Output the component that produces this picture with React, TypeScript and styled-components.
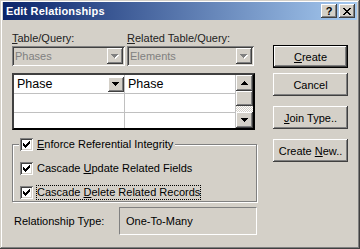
import React from "react";
import styled, { createGlobalStyle, css } from "styled-components";

const GlobalStyle = createGlobalStyle`
  html, body {
    margin: 0;
    padding: 0;
    background: #d4d0c8;
  }
  body {
    font-family: "Liberation Sans", Arial, sans-serif;
    font-size: 11px;
    color: #000;
  }
`;

const raised = css`
  background: #d4d0c8;
  box-shadow: inset -1px -1px #404040, inset 1px 1px #fff, inset -2px -2px #808080, inset 2px 2px #d4d0c8;
`;

const sunken = css`
  box-shadow: inset 1px 1px #808080, inset -1px -1px #fff, inset 2px 2px #404040, inset -2px -2px #d4d0c8;
`;

const Window = styled.div`
  width: 360px;
  height: 249px;
  box-sizing: border-box;
  padding: 2px 3px 3px 3px;
  background: #d4d0c8;
  box-shadow: inset -1px -1px #404040, inset 1px 1px #d4d0c8, inset -2px -2px #808080, inset 2px 2px #fff;
  display: flex;
  flex-direction: column;
`;

const TitleBar = styled.div`
  height: 18px;
  display: flex;
  align-items: flex-start;
  padding-left: 3px;
  background: linear-gradient(to right, #0a246a, #a6caf0);
`;

const TitleText = styled.span`
  flex: 1;
  color: #fff;
  font-weight: bold;
  font-size: 11px;
  letter-spacing: 0.15px;
  line-height: 17px;
  padding-top: 1px;
`;

const CaptionButton = styled.span`
  ${raised};
  width: 16px;
  height: 14px;
  margin-top: 2px;
  margin-left: 2px;
  display: flex;
  align-items: center;
  justify-content: center;
  font-weight: bold;
  font-size: 11px;
  line-height: 14px;
  &:last-child {
    margin-right: 2px;
  }
`;

const Body = styled.div`
  flex: 1;
  display: flex;
  padding: 12px 0 0 9px;
`;

const LeftCol = styled.div`
  width: 245px;
  display: flex;
  flex-direction: column;
`;

const RightCol = styled.div`
  width: 75px;
  margin-left: 16px;
  padding-top: 13px;
  display: flex;
  flex-direction: column;
`;

const Pair = styled.div<{ $gap?: number }>`
  display: grid;
  grid-template-columns: 113px 127px;
  column-gap: 2px;
  margin-top: ${(p) => p.$gap ?? 0}px;
`;

const FieldLabel = styled.span`
  height: 13px;
  line-height: 13px;
  color: #222;
`;

const Combo = styled.div`
  ${sunken};
  height: 20px;
  box-sizing: border-box;
  padding: 2px;
  display: flex;
  align-items: center;
  background: #d4d0c8;
`;

const ComboText = styled.span`
  flex: 1;
  padding-left: 1px;
  color: #808080;
`;

const ArrowButton = styled.span<{ $h?: number }>`
  ${raised};
  width: 16px;
  height: ${(p) => p.$h ?? 16}px;
  flex: none;
  display: flex;
  align-items: center;
  justify-content: center;
`;

const Grid = styled.div`
  margin-top: 7px;
  width: 243px;
  height: 57px;
  box-sizing: border-box;
  border: 2px solid;
  border-color: #404040 #000 #000 #404040;
  display: flex;
  background: #fff;
`;

const Rows = styled.div`
  flex: 1;
  display: flex;
  flex-direction: column;
  overflow: hidden;
`;

const Row = styled.div`
  display: grid;
  grid-template-columns: 111px 111px;
  height: 19px;
  flex: none;
  border-bottom: 1px solid #c0c0c0;
  box-sizing: border-box;
`;

const Cell = styled.div`
  border-right: 1px solid #c0c0c0;
  display: flex;
  align-items: center;
  padding-left: 3px;
  font-size: 12.5px;
`;

const Scrollbar = styled.div`
  width: 17px;
  display: flex;
  flex-direction: column;
`;

const Thumb = styled.span`
  ${raised};
  height: 15px;
`;

const Track = styled.span`
  flex: 1;
  background: conic-gradient(#fff 25%, #d4d0c8 0 50%, #fff 0 75%, #d4d0c8 0);
  background-size: 2px 2px;
`;

const Group = styled.fieldset`
  margin: 8px 0 0 0;
  padding: 0 0 2px 0;
  min-width: 0;
  width: 245px;
  box-sizing: border-box;
  border: 1px solid #808080;
  box-shadow: inset 1px 1px #fff, 1px 1px #fff;
`;

const GroupLegend = styled.legend`
  margin-left: 6px;
  padding: 0 2px 0 1px;
  background: #d4d0c8;
`;

const CheckRow = styled.div<{ $gap?: number }>`
  display: flex;
  align-items: center;
  gap: 4px;
  height: 13px;
  padding-left: ${(p) => (p.$gap === undefined ? 0 : 7)}px;
  margin-top: ${(p) => p.$gap ?? 0}px;
`;

const Box = styled.span`
  ${sunken};
  width: 13px;
  height: 13px;
  flex: none;
  background: #fff;
  display: block;
`;

const CheckText = styled.span<{ $focus?: boolean }>`
  line-height: 13px;
  white-space: nowrap;
  ${(p) =>
    p.$focus &&
    css`
      outline: 1px dotted #000;
      outline-offset: 0;
    `}
`;

const TypeRow = styled.div`
  margin-top: 5px;
  display: flex;
  align-items: center;
  height: 28px;
`;

const TypeLabel = styled.span`
  width: 105px;
  padding-left: 2px;
`;

const TypeBox = styled.div`
  width: 138px;
  height: 28px;
  box-sizing: border-box;
  border: 1px solid;
  border-color: #808080 #fff #fff #808080;
  display: flex;
  align-items: center;
  padding-left: 6px;
`;

const PushButton = styled.button<{ $gap?: number; $default?: boolean }>`
  ${raised};
  width: 75px;
  height: 23px;
  box-sizing: border-box;
  margin-top: ${(p) => p.$gap ?? 0}px;
  padding: 0;
  border: 0;
  font: 11px "Liberation Sans", Arial, sans-serif;
  color: #000;
  ${(p) =>
    p.$default &&
    css`
      border: 1px solid #000;
      box-shadow: inset -1px -1px #404040, inset 1px 1px #fff, inset -2px -2px #808080;
    `}
`;

const pixelPath = (rows: string[], ox = 0, oy = 0) =>
  rows
    .flatMap((r, y) =>
      r.split("").map((c, x) => (c === "X" ? `M${ox + x} ${oy + y}h1v1h-1z` : ""))
    )
    .join("");

const CloseGlyph = () => (
  <svg width="8" height="7" shapeRendering="crispEdges">
    <path
      d={pixelPath([
        "XX....XX",
        ".XX..XX.",
        "..XXXX..",
        "...XX...",
        "..XXXX..",
        ".XX..XX.",
        "XX....XX",
      ])}
      fill="#000"
    />
  </svg>
);

const Arrow = ({ up, disabled }: { up?: boolean; disabled?: boolean }) => {
  const rows = up ? ["...X...", "..XXX..", ".XXXXX.", "XXXXXXX"] : ["XXXXXXX", ".XXXXX.", "..XXX..", "...X..."];
  return (
    <svg width="8" height="5" shapeRendering="crispEdges">
      {disabled && <path d={pixelPath(rows, 1, 1)} fill="#fff" />}
      <path d={pixelPath(rows)} fill={disabled ? "#808080" : "#000"} />
    </svg>
  );
};

const checkCols = [2, 3, 4, 3, 2, 1, 0];

const Check = () => (
  <Box>
    <svg width="13" height="13" shapeRendering="crispEdges">
      <path d={checkCols.map((r, c) => `M${3 + c} ${3 + r}h1v3h-1z`).join("")} fill="#000" />
    </svg>
  </Box>
);

export default function App() {
  return (
    <>
      <GlobalStyle />
      <Window>
        <TitleBar>
          <TitleText>Edit Relationships</TitleText>
          <CaptionButton>?</CaptionButton>
          <CaptionButton>
            <CloseGlyph />
          </CaptionButton>
        </TitleBar>
        <Body>
          <LeftCol>
            <Pair>
              <FieldLabel>
                <u>T</u>able/Query:
              </FieldLabel>
              <FieldLabel>
                <u>R</u>elated Table/Query:
              </FieldLabel>
            </Pair>
            <Pair $gap={1}>
              <Combo>
                <ComboText>Phases</ComboText>
                <ArrowButton>
                  <Arrow disabled />
                </ArrowButton>
              </Combo>
              <Combo>
                <ComboText>Elements</ComboText>
                <ArrowButton>
                  <Arrow disabled />
                </ArrowButton>
              </Combo>
            </Pair>
            <Grid>
              <Rows>
                <Row>
                  <Cell>
                    <span style={{ flex: 1 }}>Phase</span>
                    <ArrowButton $h={15}>
                      <Arrow />
                    </ArrowButton>
                  </Cell>
                  <Cell>Phase</Cell>
                </Row>
                <Row>
                  <Cell />
                  <Cell />
                </Row>
                <Row>
                  <Cell />
                  <Cell />
                </Row>
              </Rows>
              <Scrollbar>
                <ArrowButton style={{ width: 17 }}>
                  <Arrow up />
                </ArrowButton>
                <Thumb />
                <Track />
                <ArrowButton style={{ width: 17 }}>
                  <Arrow />
                </ArrowButton>
              </Scrollbar>
            </Grid>
            <Group>
              <GroupLegend>
                <CheckRow>
                  <Check />
                  <CheckText>
                    <u>E</u>nforce Referential Integrity
                  </CheckText>
                </CheckRow>
              </GroupLegend>
              <CheckRow $gap={11}>
                <Check />
                <CheckText>
                  Cascade <u>U</u>pdate Related Fields
                </CheckText>
              </CheckRow>
              <CheckRow $gap={11}>
                <Check />
                <CheckText $focus>
                  Cascade <u>D</u>elete Related Records
                </CheckText>
              </CheckRow>
            </Group>
            <TypeRow>
              <TypeLabel>Relationship Type:</TypeLabel>
              <TypeBox>One-To-Many</TypeBox>
            </TypeRow>
          </LeftCol>
          <RightCol>
            <PushButton $default>
              <u>C</u>reate
            </PushButton>
            <PushButton $gap={5}>Cancel</PushButton>
            <PushButton $gap={10}>
              <u>J</u>oin Type..
            </PushButton>
            <PushButton $gap={10}>
              Create <u>N</u>ew..
            </PushButton>
          </RightCol>
        </Body>
      </Window>
    </>
  );
}
